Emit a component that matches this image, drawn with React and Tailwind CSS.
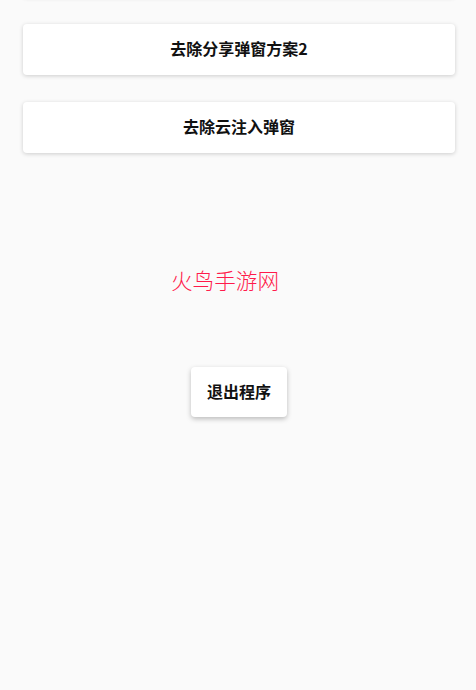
import React from 'react';

const font = { fontFamily: '"Noto Sans CJK SC", "Noto Sans", sans-serif' };

const Card = ({ children, className = '' }) => (
  <button
    className={`ml-[23px] w-[432px] h-[51px] pb-[3px] rounded-[4px] bg-white shadow-[0_1px_4px_rgba(0,0,0,0.18)] text-[16px] font-bold text-[#111] flex items-center justify-center ${className}`}
  >
    {children}
  </button>
);

export default function App() {
  return (
    <div className="min-h-[690px] w-full bg-[#fafafa] overflow-hidden flex flex-col" style={font}>
      {/* card scrolled off the top */}
      <Card className="mt-[-54px] shrink-0" />
      <Card className="mt-[27px] shrink-0">去除分享弹窗方案2</Card>
      <Card className="mt-[27px] shrink-0">去除云注入弹窗</Card>

      <p className="mt-[110px] ml-[171px] h-[33px] leading-[33px] text-[21.6px] font-light text-[#ff1a4b]">
        火鸟手游网
      </p>

      <div className="mt-[71px] flex justify-center pl-[2px]">
        <button className="h-[50px] w-[96px] pb-[3px] rounded-[4px] bg-white shadow-[0_2px_5px_rgba(0,0,0,0.25)] text-[16px] font-bold text-[#111]">
          退出程序
        </button>
      </div>
    </div>
  );
}
